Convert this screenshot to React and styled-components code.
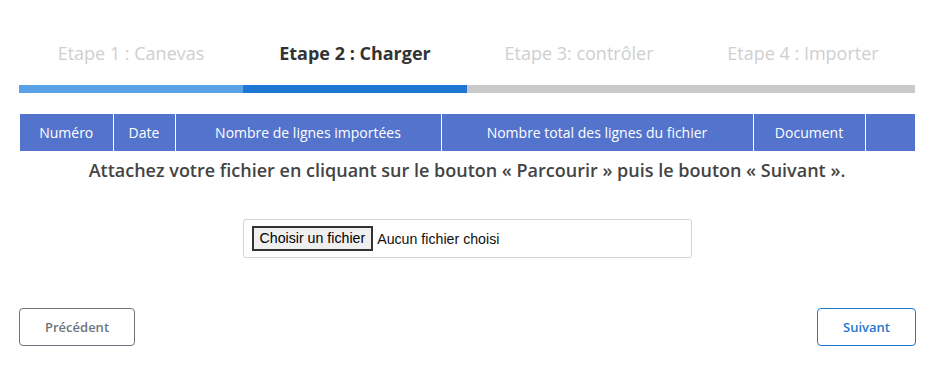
import React from 'react'
import styled, { createGlobalStyle } from 'styled-components'

const GlobalStyle = createGlobalStyle`
  body {
    margin: 0;
    background: #fff;
    font-family: "Open Sans", "Liberation Sans", sans-serif;
  }
`

const steps = [
  { label: 'Etape 1 : Canevas', state: 'done' },
  { label: 'Etape 2 : Charger', state: 'active' },
  { label: 'Etape 3: contrôler', state: 'todo' },
  { label: 'Etape 4 : Importer', state: 'todo' },
]

const columns = [
  { title: 'Numéro', width: 93 },
  { title: 'Date', width: 62 },
  { title: 'Nombre de lignes importées', width: 266 },
  { title: 'Nombre total des lignes du fichier', width: 312 },
  { title: 'Document', width: 112 },
  { title: '', width: 50 },
]

const App = () => (
  <>
    <GlobalStyle />
    <Wizard>
      <Steps>
        {steps.map(s => (
          <Step key={s.label} $state={s.state}>
            <StepLabel $state={s.state}>{s.label}</StepLabel>
            <StepBar $state={s.state} />
          </Step>
        ))}
      </Steps>

      <Table>
        <colgroup>
          {columns.map((c, i) => (
            <col key={i} style={{ width: c.width }} />
          ))}
        </colgroup>
        <thead>
          <tr>
            {columns.map((c, i) => (
              <Th key={i}>{c.title}</Th>
            ))}
          </tr>
        </thead>
      </Table>

      <Hint>
        Attachez votre fichier en cliquant sur le bouton « Parcourir » puis le bouton « Suivant ».
      </Hint>

      <UploadBox>
        <HiddenInput type="file" id="fichier" />
        <PickButton htmlFor="fichier">Choisir un fichier</PickButton>
        <FileName>Aucun fichier choisi</FileName>
      </UploadBox>

      <Actions>
        <NavButton $variant="secondary">Précédent</NavButton>
        <NavButton $variant="primary">Suivant</NavButton>
      </Actions>
    </Wizard>
  </>
)

export default App

const Wizard = styled.div`
  padding: 40px 19px 20px 19px;
  width: 896px;
`

const Steps = styled.div`
  display: grid;
  grid-template-columns: repeat(4, 1fr);
`

const Step = styled.div`
  display: flex;
  flex-direction: column;
  align-items: stretch;
`

const StepLabel = styled.div`
  text-align: center;
  font-size: 18px;
  line-height: 26px;
  font-weight: ${p => (p.$state === 'active' ? 700 : 400)};
  color: ${p => (p.$state === 'active' ? '#333' : '#cfcfcf')};
  margin-bottom: 19px;
`

const StepBar = styled.div`
  height: 8px;
  background: ${p =>
    p.$state === 'done' ? '#5aa2e7' : p.$state === 'active' ? '#1d77d3' : '#cacaca'};
`

const Table = styled.table`
  margin: 21px 0 0 1px;
  width: 895px;
  border-collapse: collapse;
  table-layout: fixed;
`

const Th = styled.th`
  background: #5473cc;
  color: #fff;
  font-size: 14px;
  font-weight: 400;
  height: 37px;
  padding: 0;
  border-left: 1px solid #fff;
  border-right: 1px solid #fff;
  &:first-child {
    border-left: none;
  }
  &:last-child {
    border-right: none;
  }
`

const Hint = styled.p`
  margin: 6px 0 0 0;
  text-align: center;
  font-size: 18px;
  line-height: 26px;
  font-weight: 600;
  color: #444;
`

const UploadBox = styled.div`
  margin: 36px auto 0 auto;
  box-sizing: border-box;
  width: 449px;
  height: 39px;
  border: 1px solid #cfd4da;
  border-radius: 3px;
  display: flex;
  align-items: center;
  padding: 0 8px;
  gap: 4px;
  font-family: "Liberation Sans", Arial, sans-serif;
  font-size: 14.2px;
  color: #111;
`

const HiddenInput = styled.input`
  display: none;
`

const PickButton = styled.label`
  background: #efefef;
  border: 2px solid #333;
  padding: 2px 6px;
  line-height: 17px;
  color: #000;
  cursor: pointer;
`

const FileName = styled.span``

const Actions = styled.div`
  margin-top: 50px;
  margin-right: -1px;
  display: flex;
  justify-content: space-between;
`

const NavButton = styled.button`
  box-sizing: border-box;
  height: 38px;
  padding: 0 25px;
  background: #fff;
  border-radius: 4px;
  font-family: "Open Sans", "Liberation Sans", sans-serif;
  font-size: 13px;
  font-weight: 600;
  border: 1px solid ${p => (p.$variant === 'primary' ? '#1f77d0' : '#6c757d')};
  color: ${p => (p.$variant === 'primary' ? '#1f77d0' : '#6c757d')};
  cursor: pointer;
`
